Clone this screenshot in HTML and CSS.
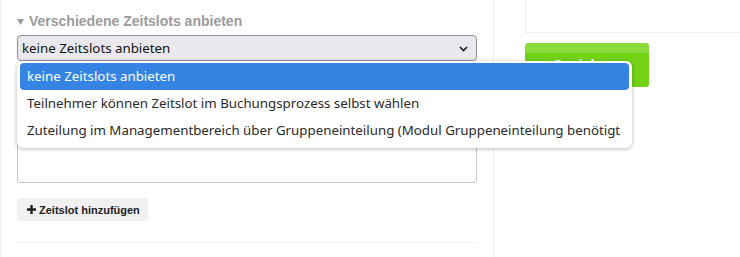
FILE: index.html
```html
<!DOCTYPE html>
<html lang="de">
<head>
<meta charset="utf-8">
<title>Zeitslots</title>
<link rel="stylesheet" href="styles.css">
</head>
<body>
<div class="page">
  <div class="main">
    <h3 class="section-title"><svg class="caret" width="7" height="6" viewBox="0 0 7 6"><path d="M0 0h7L3.5 6z" fill="#9b9b9b"/></svg>Verschiedene Zeitslots anbieten</h3>
    <div class="select-wrap">
      <div class="select">
        <span>keine Zeitslots anbieten</span>
        <svg class="chev" width="9" height="6" viewBox="0 0 9 6"><path d="M1 1l3.5 3.5L8 1" fill="none" stroke="#1a1a1a" stroke-width="1.6"/></svg>
      </div>
      <ul class="popup">
        <li class="opt selected">keine Zeitslots anbieten</li>
        <li class="opt">Teilnehmer können Zeitslot im Buchungsprozess selbst wählen</li>
        <li class="opt">Zuteilung im Managementbereich über Gruppeneinteilung (Modul Gruppeneinteilung benötigt</li>
      </ul>
    </div>
    <div class="textarea"></div>
    <button class="add-btn"><svg width="9" height="9" viewBox="0 0 9 9"><path d="M3.3 0h2.4v3.3H9v2.4H5.7V9H3.3V5.7H0V3.3h3.3z" fill="#222"/></svg><span>Zeitslot hinzufügen</span></button>
    <div class="divider"></div>
  </div>
  <div class="side">
    <div class="side-box"></div>
    <button class="save-btn">Speichern</button>
  </div>
</div>
</body>
</html>
```

FILE: styles.css
```css
* { box-sizing: border-box; }
html, body { margin: 0; padding: 0; background: #fff; }
body { font-family: "Liberation Sans", Arial, sans-serif; height: 257px; overflow: hidden; }

.page {
  display: flex;
  height: 257px;
  border-left: 2px solid #f4f4f4;
}

.main {
  width: 492px;
  border-right: 1px solid #efefef;
  padding: 0 15px 0 15px;
}

.section-title {
  margin: 11px 0 0 0;
  font-size: 14px;
  line-height: 20px;
  font-weight: bold;
  color: #9b9b9b;
  display: flex;
  align-items: center;
}
.caret {
  margin: 1px 5px 0 0;
  flex: none;
}

.select-wrap {
  position: relative;
  margin-top: 4px;
}
.select {
  height: 26px;
  width: 460px;
  border: 1px solid #8f8f9d;
  border-radius: 4px;
  background: #e9e9ed;
  display: flex;
  align-items: center;
  justify-content: space-between;
  padding: 0 8px 0 4px;
  font-family: "Noto Sans", sans-serif;
  font-size: 13.3px;
  color: #111;
}
.chev { margin-top: 1px; }

.popup {
  position: absolute;
  left: 0;
  top: 26px;
  width: 615px;
  height: 87px;
  margin: 0;
  padding: 2px 3px;
  list-style: none;
  background: #fff;
  border-radius: 6px;
  box-shadow: 0 1px 4px rgba(0,0,0,0.28);
  font-family: "Noto Sans", sans-serif;
  font-size: 13.3px;
  color: #2a2a2a;
  z-index: 5;
}
.opt {
  height: 27px;
  line-height: 27px;
  padding: 0 7px;
  border-radius: 4px;
  white-space: nowrap;
}
.opt.selected {
  background: #3584e4;
  color: #fff;
}

.textarea {
  margin-top: 40px;
  width: 460px;
  height: 82px;
  border: 1px solid #c8c8c8;
  border-radius: 3px;
}

.add-btn {
  margin-top: 15px;
  height: 23px;
  width: 131px;
  border: none;
  border-radius: 3px;
  background: #f1f1f1;
  font-family: "Liberation Sans", Arial, sans-serif;
  font-size: 11px;
  font-weight: bold;
  color: #222;
  padding: 0 0 0 10px;
  display: flex;
  align-items: center;
  gap: 3px;
  white-space: nowrap;
}

.divider {
  margin-top: 21px;
  width: 460px;
  border-top: 1px solid #efefef;
}

.side {
  margin-left: 31px;
  flex: 1;
}
.side-box {
  height: 33px;
  border: 1px solid #efefef;
  border-top: none;
  border-right: none;
}
.save-btn {
  margin-top: 10px;
  width: 124px;
  height: 44px;
  border: none;
  border-radius: 3px;
  background: linear-gradient(#8cdb3d 0, #8cdb3d 10px, #73d216 10px, #73d216 100%);
  color: #fff;
  font-family: "Liberation Sans", Arial, sans-serif;
  font-size: 14px;
  font-weight: bold;
  padding: 0;
}
```
